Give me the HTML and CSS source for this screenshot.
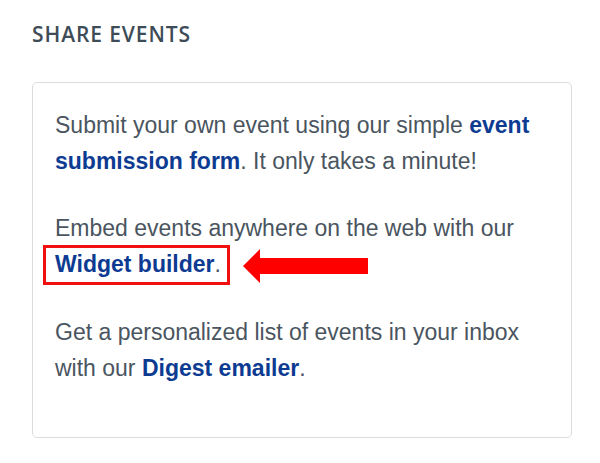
FILE: index.html
```html
<!DOCTYPE html>
<html lang="en">
<head>
    <meta charset="UTF-8">
    <title>Share events</title>
    <link rel="stylesheet" href="styles.css">
</head>
<body>
    <div class="sidebar">
        <h2 class="section-title">Share Events</h2>
        <div class="share-box">
            <p>Submit your own event using our simple <a href="#">event submission form</a>. It only takes a minute!</p>
            <p>Embed events anywhere on the web with our <span class="highlight"><a href="#">Widget builder</a>.</span><svg class="arrow" width="125" height="34" viewBox="0 0 125 34"><polygon points="0,17 17,0 17,9 125,9 125,25 17,25 17,34" fill="#ff0000"/></svg></p>
            <p>Get a personalized list of events in your inbox with our <a href="#">Digest emailer</a>.</p>
        </div>
    </div>
</body>
</html>
```

FILE: styles.css
```css
body {
    margin: 0;
    background-color: #ffffff;
    font-family: "Liberation Sans", Arial, sans-serif;
}
.sidebar {
    padding: 20px 28px 0 32px;
}
.section-title {
    margin: 0 0 34px;
    font-family: "Open Sans", sans-serif;
    font-weight: 600;
    font-size: 21px;
    line-height: 28px;
    letter-spacing: 0.9px;
    text-transform: uppercase;
    color: #3e4c58;
}
.share-box {
    width: 540px;
    box-sizing: border-box;
    border: 1px solid #dcdcdc;
    border-radius: 5px;
    padding: 24px 22px 20px;
}
.share-box p {
    margin: 0 0 31px;
    font-size: 23px;
    line-height: 36px;
    color: #4a5560;
}
.share-box a {
    color: #0e3b92;
    font-weight: bold;
    text-decoration: none;
}
.highlight {
    border: 3px solid #f01010;
    padding: 3px 6px 5px 9px;
    margin-left: -12px;
}
.arrow {
    margin-left: 13px;
    vertical-align: middle;
}
```
